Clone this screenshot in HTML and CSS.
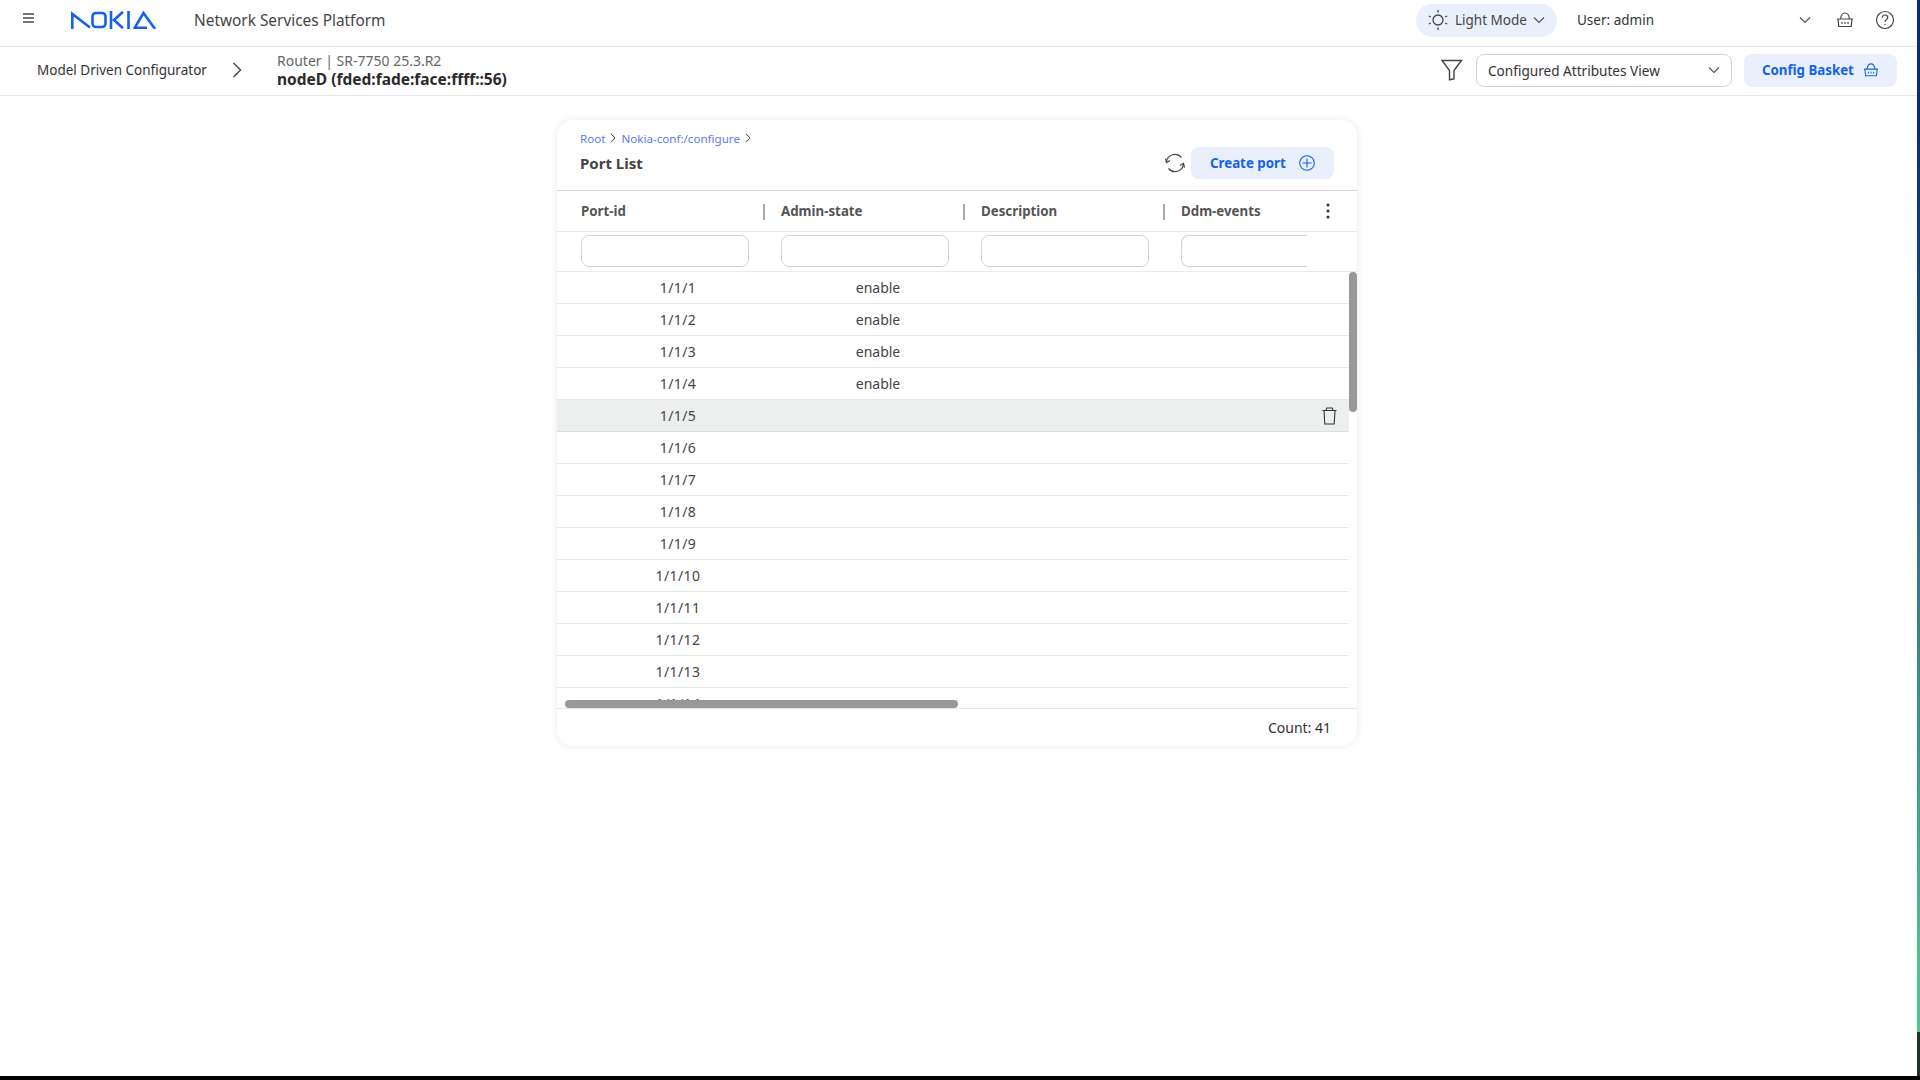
FILE: index.html
```html
<!DOCTYPE html>
<html lang="en">
<head>
<meta charset="utf-8">
<title>Network Services Platform</title>
<link rel="stylesheet" href="styles.css">
</head>
<body>
<div class="screen">
  <div class="app">
    <header class="topbar">
      <svg class="menu-icon" width="14" height="12" viewBox="0 0 14 12"><path d="M1 2h11M1 6h11M1 10h11" stroke="#4a4a4a" stroke-width="1.4" fill="none"/></svg>
      <svg class="logo" width="86" height="18" viewBox="0 0 86 18" fill="none" stroke="#1261f0" stroke-width="2.6"><path d="M1.300 18V3L19 16.500"/><path d="M25 2h6c2 0 3.500 1.500 3.500 3.500v7c0 2-1.500 3.500-3.500 3.500h-6c-2 0-3.500-1.500-3.500-3.500v-7C21.500 3.500 23 2 25 2z"/><path d="M40 0v18M52 .8 43 9 52 17.200"/><path d="M57.500 0v18"/><path d="M63 18 72.500 2 84 18M63 16.700h13"/></svg>
      <span class="product">Network Services Platform</span>
      <div class="top-right">
        <div class="mode-pill">
          <svg width="22" height="22" viewBox="0 0 22 22" fill="none" stroke="#444" stroke-width="1.300"><circle cx="11" cy="11" r="5"/><path d="M11 1v2.500M11 18.500V21M1.800 7l2 1M1.800 15l2-1M20.200 7l-2 1M20.200 15l-2-1"/></svg>
          <span>Light Mode</span>
          <svg width="12" height="8" viewBox="0 0 12 8" fill="none" stroke="#555" stroke-width="1.200"><path d="M1 1.500 6 6.500 11 1.500"/></svg>
        </div>
        <span class="user">User: admin</span>
        <svg class="user-caret" width="12" height="8" viewBox="0 0 12 8" fill="none" stroke="#555" stroke-width="1.200"><path d="M1 1.500 6 6.500 11 1.500"/></svg>
        <svg class="basket" width="18" height="16" viewBox="0 0 18 16" fill="none" stroke="#444" stroke-width="1.200"><path d="M1 7h16M2 7l.8 7.500h12.400L16 7M4.500 7C5 3 6.500 1 9 1s4 2 4.500 6M6 10v2M9 10v2M12 10v2"/></svg>
        <svg class="help" width="20" height="20" viewBox="0 0 20 20" fill="none" stroke="#444" stroke-width="1.200"><circle cx="10" cy="10" r="8.500"/><path d="M7.300 7.800c0-1.700 1.200-2.800 2.800-2.800s2.700 1 2.700 2.400c0 2.100-2.800 2.200-2.800 4.500M10 14v1.300"/></svg>
      </div>
    </header>
    <div class="subbar">
      <span class="mdc">Model Driven Configurator</span>
      <svg class="crumb-arrow" width="10" height="16" viewBox="0 0 10 16" fill="none" stroke="#444" stroke-width="1.400"><path d="M1.500 1 8.500 8 1.500 15"/></svg>
      <div class="node">
        <span class="node-type">Router | SR-7750 25.3.R2</span>
        <span class="node-name">nodeD (fded:fade:face:ffff::56)</span>
      </div>
      <div class="sub-right">
        <svg width="22" height="22" viewBox="0 0 22 22" fill="none" stroke="#444" stroke-width="1.400"><path d="M1 1.500h19.500L13 11.500V20l-4.500.8v-9.300z"/></svg>
        <div class="view-select">
          <span>Configured Attributes View</span>
          <svg width="12" height="8" viewBox="0 0 12 8" fill="none" stroke="#555" stroke-width="1.200"><path d="M1 1.500 6 6.500 11 1.500"/></svg>
        </div>
        <button class="soft-btn basket-btn">
          <span>Config Basket</span>
          <svg width="16" height="14" viewBox="0 0 18 16" fill="none" stroke="#1261f0" stroke-width="1.200"><path d="M1 7h16M2 7l.8 7.500h12.400L16 7M4.500 7C5 3 6.500 1 9 1s4 2 4.500 6M6 10v2M9 10v2M12 10v2"/></svg>
        </button>
      </div>
    </div>
    <main class="content">
      <section class="card">
        <div class="card-head">
          <div class="titles">
            <div class="trail">
              <a>Root</a>
              <svg width="6" height="10" viewBox="0 0 6 10" fill="none" stroke="#444"><path d="M1 .8 5 5 1 9.200"/></svg>
              <a>Nokia-conf:/configure</a>
              <svg width="6" height="10" viewBox="0 0 6 10" fill="none" stroke="#444"><path d="M1 .8 5 5 1 9.200"/></svg>
            </div>
            <h1>Port List</h1>
          </div>
          <div class="head-actions">
            <svg width="20" height="20" viewBox="0 0 20 20" fill="none" stroke="#444" stroke-width="1.200"><path d="M1.500 9A8.500 8.500 0 0 1 16.500 4.500M18.500 11A8.500 8.500 0 0 1 3.500 15.500"/><path d="M.5 5.500 1.500 9.500 5 7.500M19.500 14.500l-1-4-3.500 2"/></svg>
            <button class="soft-btn create-btn">
              <span>Create port</span>
              <svg width="16" height="16" viewBox="0 0 16 16" fill="none" stroke="#1261f0" stroke-width="1.100"><circle cx="8" cy="8" r="7.300"/><path d="M8 3.500v9M3.500 8h9"/></svg>
            </button>
          </div>
        </div>
        <div class="table">
          <div class="thead">
            <div class="th">Port-id</div>
            <div class="th sep">Admin-state</div>
            <div class="th sep">Description</div>
            <div class="th sep">Ddm-events</div>
            <svg class="kebab" width="4" height="16" viewBox="0 0 4 16" fill="#333"><circle cx="2" cy="2" r="1.500"/><circle cx="2" cy="8" r="1.500"/><circle cx="2" cy="14" r="1.500"/></svg>
          </div>
          <div class="filters">
            <div class="fcell"><div class="finput"></div></div>
            <div class="fcell"><div class="finput"></div></div>
            <div class="fcell"><div class="finput"></div></div>
            <div class="fcell last"><div class="finput cut"></div></div>
          </div>
          <div class="tbody">
            <div class="rows">
              <div class="row"><span class="c1">1/1/1</span><span class="c2">enable</span></div>
              <div class="row"><span class="c1">1/1/2</span><span class="c2">enable</span></div>
              <div class="row"><span class="c1">1/1/3</span><span class="c2">enable</span></div>
              <div class="row"><span class="c1">1/1/4</span><span class="c2">enable</span></div>
              <div class="row hover"><span class="c1">1/1/5</span><span class="c2"></span>
                <svg class="trash" width="15" height="18" viewBox="0 0 15 18" fill="none" stroke="#333" stroke-width="1.100"><path d="M.5 3.500h14M2 3.500 2.800 17h9.400l.8-13.500M4 3.300 4.800 1h5.400l.8 2.300"/></svg>
              </div>
              <div class="row"><span class="c1">1/1/6</span></div>
              <div class="row"><span class="c1">1/1/7</span></div>
              <div class="row"><span class="c1">1/1/8</span></div>
              <div class="row"><span class="c1">1/1/9</span></div>
              <div class="row"><span class="c1">1/1/10</span></div>
              <div class="row"><span class="c1">1/1/11</span></div>
              <div class="row"><span class="c1">1/1/12</span></div>
              <div class="row"><span class="c1">1/1/13</span></div>
              <div class="row"><span class="c1">1/1/14</span></div>
            </div>
            <div class="vscroll"></div>
            <div class="hscroll"></div>
          </div>
        </div>
        <div class="card-foot">Count: 41</div>
      </section>
    </main>
  </div>
  <div class="edge"></div>
</div>
<div class="bottom-strip"></div>
</body>
</html>
```
FILE: styles.css
```css
* { box-sizing: border-box; }
html, body { margin: 0; height: 100%; overflow: hidden; background: #000; }
body { font-family: "Noto Sans", "Liberation Sans", sans-serif; color: #333; font-size: 14px; display: flex; flex-direction: column; }
span, button { white-space: nowrap; }
.screen { display: flex; height: 1076px; flex: none; }
.bottom-strip { height: 4px; flex: none; background: #000; }
.app { flex: 1; background: #fff; display: flex; flex-direction: column; min-width: 0; }
.edge { width: 3px; background: linear-gradient(#1f3329, #1f3329) bottom / 100% 44px no-repeat, linear-gradient(#0a2a85 12%, #52c58e 92%); }
.topbar { height: 47px; flex: none; display: flex; align-items: center; border-bottom: 1px solid #e8e9ee; padding: 0 0 6px 22px; }
.menu-icon { margin-bottom: 4px; }
.logo { margin-left: 35px; }
.product { margin-left: 37px; font-size: 15.4px; color: #444; }
.top-right { margin-left: auto; display: flex; align-items: center; padding-right: 22px; }
.mode-pill { display: flex; align-items: center; gap: 6px; height: 33px; width: 141px; padding: 0 11px; border-radius: 17px; background: #eaf0fb; color: #444; font-size: 13.500px; }
.user { margin-left: 20px; width: 222px; font-size: 13.500px; color: #333; }
.basket { margin-left: 25px; }
.help { margin-left: 21px; }
.subbar { height: 49px; flex: none; display: flex; align-items: center; border-bottom: 1px solid #e8e9ee; padding: 0 0 2px 37px; }
.mdc { font-size: 13.500px; color: #333; width: 195px; }
.node { display: flex; flex-direction: column; margin-left: 35px; line-height: 19px; }
.node-type { font-size: 14px; color: #666; }
.node-name { font-size: 15.500px; font-weight: 700; color: #2b2b2b; }
.sub-right { margin-left: auto; display: flex; align-items: center; padding-right: 20px; }
.view-select { margin-left: 13px; width: 256px; height: 33px; border: 1px solid #d0d1d4; border-radius: 8px; display: flex; align-items: center; justify-content: space-between; padding: 0 11px; font-size: 13.600px; color: #333; }
.soft-btn { border: 0; background: #eaf0fb; color: #1261f0; font: 700 13.300px "Noto Sans", "Liberation Sans", sans-serif; display: flex; align-items: center; }
.basket-btn { margin-left: 12px; width: 153px; height: 33px; border-radius: 8px; padding: 0 18px; justify-content: space-between; }
.content { flex: 1; display: flex; justify-content: center; align-items: flex-start; padding: 24px 0 0 0; }
.card { width: 800px; margin-left: -3px; height: 626px; background: #fff; border-radius: 16px; box-shadow: 0 0 8px rgba(0,0,0,.09); display: flex; flex-direction: column; overflow: hidden; }
.card-head { height: 71px; flex: none; display: flex; justify-content: space-between; padding: 10px 23px 0 23px; border-bottom: 1px solid #d5d6dc; }
.trail { display: flex; align-items: center; gap: 5px; font-size: 11.600px; color: #5a7cec; height: 16px; }
.titles h1 { margin: 5px 0 0; font-size: 15px; font-weight: 700; color: #444; line-height: 24px; }
.head-actions { display: flex; align-items: flex-start; gap: 6px; padding-top: 17px; }
.head-actions > svg { margin-top: 6px; }
.create-btn { width: 143px; height: 32px; border-radius: 8px; padding: 0 19px; justify-content: space-between; }
.table { flex: 1; display: flex; flex-direction: column; min-height: 0; }
.thead { height: 41px; flex: none; display: grid; grid-template-columns: 200px 200px 200px 1fr; align-items: center; border-bottom: 1px solid #e8e9ee; position: relative; }
.th { font-size: 13.300px; font-weight: 700; color: #555; padding-left: 24px; position: relative; }
.sep::before { content: ""; position: absolute; left: 6px; top: 2px; height: 16px; width: 2px; background: #aaa; }
.kebab { position: absolute; right: 27px; top: 12px; }
.filters { height: 40px; flex: none; display: grid; grid-template-columns: 200px 200px 200px 1fr; border-bottom: 1px solid #e8e9ee; align-items: center; padding-bottom: 2px; }
.fcell { padding-left: 24px; }
.finput { width: 168px; height: 32px; border: 1px solid #d0d1d4; border-radius: 8px; }
.fcell.last { overflow: hidden; width: 150px; padding-right: 0; }
.finput.cut { border-right-color: transparent; }
.tbody { flex: 1; position: relative; overflow: hidden; min-height: 0; border-bottom: 1px solid #e8e9ee; }
.rows { width: 792px; }
.row { height: 32px; display: grid; grid-template-columns: 200px 200px 1fr; align-items: center; border-bottom: 1px solid #e9e9ea; font-size: 14px; color: #444; position: relative; }
.row .c1 { text-align: center; padding-left: 42px; letter-spacing: .4px; }
.row .c2 { text-align: center; padding-left: 42px; }
.row.hover { background: #edefee; border-bottom-color: #dcdedd; }
.trash { position: absolute; right: 12px; top: 7px; }
.vscroll { position: absolute; right: 0; top: 0; width: 8px; height: 140px; background: #989898; border-radius: 4px; }
.hscroll { position: absolute; left: 8px; bottom: 0; width: 393px; height: 8px; background: #989898; border-radius: 4px; }
.card-foot { height: 37px; flex: none; text-align: right; padding: 9px 26px 0 0; font-size: 14px; color: #333; }
```
